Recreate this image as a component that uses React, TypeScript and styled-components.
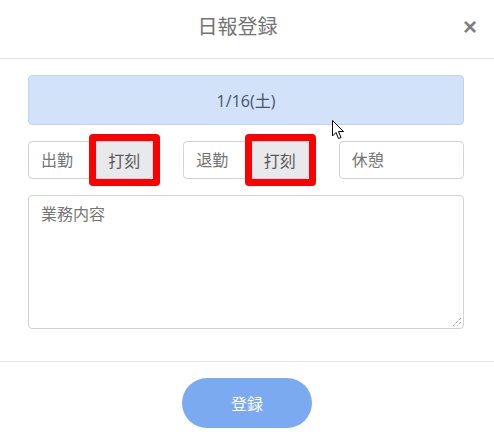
import React from "react";
import styled, { createGlobalStyle } from "styled-components";

const Global = createGlobalStyle`
  html, body { margin: 0; padding: 0; background: #fff; }
  body { font-family: "Open Sans", "Noto Sans CJK JP", sans-serif; }
  * { box-sizing: border-box; }
`;

const Modal = styled.div`
  position: relative;
  width: 494px;
  height: 439px;
  overflow: hidden;
  background: #fff;
`;

const Header = styled.div`
  display: flex;
  align-items: center;
  height: 59px;
  padding: 0 13px 4px 16px;
  border-bottom: 1px solid #e3e3e3;
`;

const Title = styled.h5`
  flex: 1;
  margin: 0;
  text-align: center;
  font-size: 20px;
  font-weight: 400;
  line-height: 30px;
  color: #737373;
`;

const Close = styled.button`
  width: 22px;
  padding: 0;
  border: none;
  background: transparent;
  font-family: "Liberation Sans", sans-serif;
  font-size: 24px;
  font-weight: 700;
  line-height: 30px;
  color: #000;
  opacity: 0.5;
  cursor: pointer;
`;

const Body = styled.div`
  padding: 16px 30px 32px 28px;
  display: flex;
  flex-direction: column;
  gap: 16px;
`;

const DateBar = styled.div`
  height: 50px;
  display: flex;
  align-items: center;
  justify-content: center;
  background: #d2e3f9;
  border: 1px solid #bed5f2;
  border-radius: 4px;
  color: #4a5264;
  font-size: 16px;
`;

const Row = styled.div`
  display: grid;
  grid-template-columns: repeat(3, 1fr);
  column-gap: 30px;
`;

const InputGroup = styled.div`
  display: flex;
  height: 38px;
`;

const Field = styled.div<{ $attached?: boolean }>`
  flex: 1;
  min-width: 0;
  display: flex;
  align-items: center;
  padding: 0 12px;
  border: 1px solid #ced4da;
  border-radius: ${(p) => (p.$attached ? "4px 0 0 4px" : "4px")};
  color: #757575;
  font-size: 16px;
  line-height: 24px;
  background: #fff;
`;

const StampButton = styled.button`
  position: relative;
  width: 58px;
  margin-left: -1px;
  border: 1px solid #ced4da;
  border-radius: 0 4px 4px 0;
  background: #e8e9ec;
  color: #585858;
  font-family: "Noto Sans CJK JP", sans-serif;
  font-size: 16px;
  font-weight: 400;
  padding: 0;
  &::after {
    content: "";
    position: absolute;
    inset: -8px -8px -8px -7px;
    border: 7px solid #ff0000;
    border-radius: 4px;
    pointer-events: none;
  }
`;

const Memo = styled.div`
  position: relative;
  height: 134px;
  padding: 6px 12px;
  border: 1px solid #ced4da;
  border-radius: 4px;
  color: #757575;
  font-size: 16px;
  line-height: 24px;
`;

const Grip = styled.svg`
  position: absolute;
  right: 1px;
  bottom: 1px;
`;

const Footer = styled.div`
  border-top: 1px solid #e3e3e3;
  padding-top: 16px;
  display: flex;
  justify-content: center;
`;

const Submit = styled.button`
  width: 130px;
  height: 50px;
  border: none;
  border-radius: 25px;
  background: #7baaf0;
  color: #fff;
  font-family: "Noto Sans CJK JP", sans-serif;
  font-size: 16px;
  cursor: pointer;
`;

const Cursor = styled.svg`
  position: absolute;
  left: 332px;
  top: 120px;
`;

export default function App() {
  return (
    <Modal>
      <Global />
      <Header>
        <Title>日報登録</Title>
        <Close aria-label="close">×</Close>
      </Header>
      <Body>
        <DateBar>1/16(土)</DateBar>
        <Row>
          <InputGroup>
            <Field $attached>出勤</Field>
            <StampButton>打刻</StampButton>
          </InputGroup>
          <InputGroup>
            <Field $attached>退勤</Field>
            <StampButton>打刻</StampButton>
          </InputGroup>
          <InputGroup>
            <Field>休憩</Field>
          </InputGroup>
        </Row>
        <Memo>
          業務内容
          <Grip width="10" height="10" viewBox="0 0 10 10">
            <path d="M9 1 L1 9 M9 5 L5 9" stroke="#777" strokeWidth="1" strokeDasharray="1 1" />
          </Grip>
        </Memo>
      </Body>
      <Footer>
        <Submit>登録</Submit>
      </Footer>
      <Cursor width="13" height="20" viewBox="0 0 13 20">
        <path d="M0.5 0.5 L0.5 16 L4 12.5 L6.5 18.5 L9 17.5 L6.5 11.5 L11.5 11.5 Z" fill="#fff" stroke="#000" strokeWidth="1" />
      </Cursor>
    </Modal>
  );
}
